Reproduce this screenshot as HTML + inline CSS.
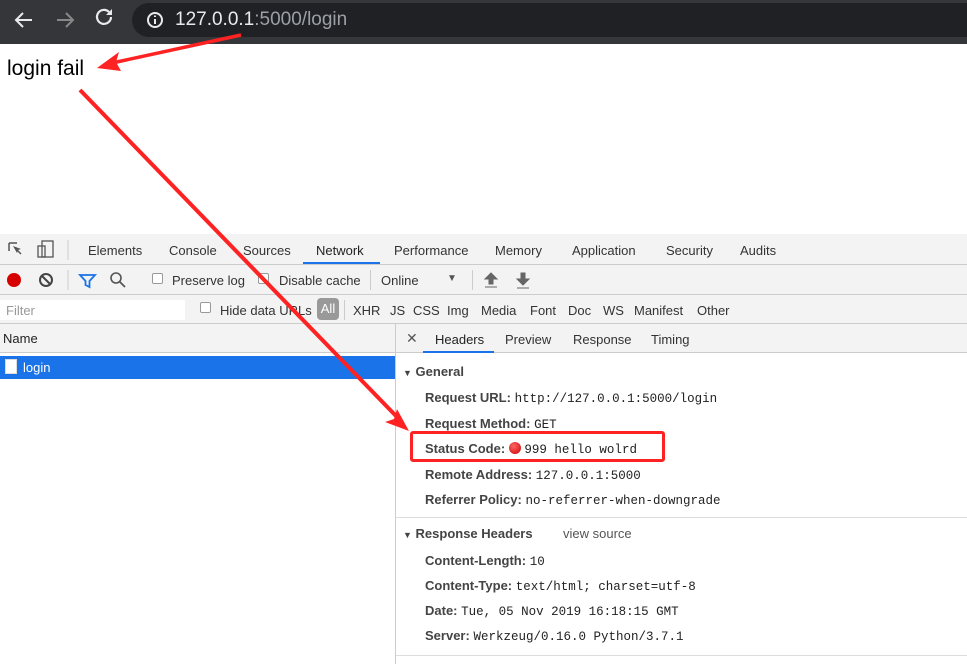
<!DOCTYPE html>
<html><head><meta charset="utf-8"><style>
*{margin:0;padding:0;box-sizing:border-box}
body{width:967px;height:664px;position:relative;overflow:hidden;background:#fff;font-family:"Liberation Sans",sans-serif;font-size:13px;color:#333}
.a{position:absolute;white-space:nowrap}
.m{font-family:"Liberation Mono",monospace;font-size:12.5px;color:#222}
.b{font-weight:bold;color:#444}
.g{color:#555}
</style></head><body>
<div class="a" style="left:0;top:0;width:967px;height:44px;background:#35363a"></div>
<div class="a" style="left:132px;top:3px;width:860px;height:34px;border-radius:17px;background:#202124"></div>
<svg class="a" style="left:0;top:0" width="170" height="44">
<g stroke="#e8eaed" stroke-width="2" fill="none"><path d="M32 20H17M23 13l-7 7 7 7"/></g>
<g stroke="#888" stroke-width="2" fill="none"><path d="M57 20h15M66 13l7 7-7 7"/></g>
<path d="M111 17a7 7 0 1 1-2-5" stroke="#e8eaed" stroke-width="2.2" fill="none"/><path d="M112 9v6h-6z" fill="#e8eaed"/>
<circle cx="155" cy="20" r="7" stroke="#e8eaed" stroke-width="2" fill="none"/><path d="M155 19v5M155 15.5v1.5" stroke="#e8eaed" stroke-width="2"/>
</svg>
<div class="a" style="left:175px;top:9px;font-size:19px;color:#e8eaed">127.0.0.1<span style="color:#9aa0a6">:5000/login</span></div>
<div class="a" style="left:7px;top:57px;font-size:21px;color:#000">login fail</div>

<div class="a" style="left:0;top:234px;width:967px;height:430px;background:#f3f3f3"></div>
<div class="a" style="left:0;top:264px;width:967px;height:1px;background:#ccc"></div>
<div class="a" style="left:0;top:294px;width:967px;height:1px;background:#ccc"></div>
<div class="a" style="left:0;top:323px;width:967px;height:1px;background:#ccc"></div>
<div class="a" style="left:0;top:300px;width:185px;height:20px;background:#fff"></div>
<div class="a" style="left:6px;top:303px;color:#999">Filter</div>
<svg class="a" style="left:0;top:234px" width="130" height="90">
<path d="M9 9h8M9 9v8" stroke="#555" stroke-width="1.5" fill="none"/><path d="M13 12l8 3-3 1-1 3z" fill="#555"/><path d="M17 16l4 4" stroke="#555" stroke-width="1.5"/>
<rect x="38" y="12" width="7" height="11" stroke="#555" fill="none" stroke-width="1.3"/><rect x="42" y="7" width="11" height="16" stroke="#555" fill="none" stroke-width="1.3"/>
<line x1="68" y1="6" x2="68" y2="26" stroke="#ccc"/>
<circle cx="14" cy="46" r="7" fill="#d60000"/>
<circle cx="46" cy="46" r="6" stroke="#444" stroke-width="2" fill="none"/><path d="M42 42l8 8" stroke="#444" stroke-width="2"/>
<line x1="68" y1="36" x2="68" y2="56" stroke="#ccc"/>
<path d="M80 41h15l-5.5 6v6l-4-2v-4z" stroke="#1a73e8" stroke-width="1.8" fill="none"/>
<circle cx="116" cy="44" r="5" stroke="#555" stroke-width="1.6" fill="none"/><path d="M120 48l5 5" stroke="#555" stroke-width="1.8"/>
</svg>
<div class="a" style="left:88px;top:243px">Elements</div>
<div class="a" style="left:169px;top:243px">Console</div>
<div class="a" style="left:243px;top:243px">Sources</div>
<div class="a" style="left:316px;top:243px;color:#222">Network</div>
<div class="a" style="left:303px;top:262px;width:77px;height:2px;background:#1a73e8"></div>
<div class="a" style="left:394px;top:243px">Performance</div>
<div class="a" style="left:495px;top:243px">Memory</div>
<div class="a" style="left:572px;top:243px">Application</div>
<div class="a" style="left:666px;top:243px">Security</div>
<div class="a" style="left:740px;top:243px">Audits</div>
<div class="a" style="left:152px;top:273px;width:11px;height:11px;border:1px solid #999;border-radius:2px;background:#fff"></div>
<div class="a" style="left:172px;top:273px">Preserve log</div>
<div class="a" style="left:258px;top:273px;width:11px;height:11px;border:1px solid #999;border-radius:2px;background:#fff"></div>
<div class="a" style="left:279px;top:273px">Disable cache</div>
<div class="a" style="left:370px;top:270px;width:1px;height:20px;background:#ccc"></div>
<div class="a" style="left:381px;top:273px">Online</div>
<div class="a" style="left:447px;top:273px;font-size:10px;color:#555">▼</div>
<div class="a" style="left:472px;top:270px;width:1px;height:20px;background:#ccc"></div>
<svg class="a" style="left:484px;top:271px" width="50" height="18"><path d="M7 2l-6 6h4v5h4V8h4z M1 16h12" fill="#666" stroke="#666" stroke-width="1"/><path d="M39 14l-6-6h4V2h4v6h4z M33 17h12" fill="#666" stroke="#666"/></svg>
<div class="a" style="left:200px;top:302px;width:11px;height:11px;border:1px solid #999;border-radius:2px;background:#fff"></div>
<div class="a" style="left:220px;top:303px">Hide data URLs</div>
<div class="a" style="left:317px;top:298px;width:22px;height:22px;border-radius:4px;background:#999;color:#fff;text-align:center;line-height:22px">All</div>
<div class="a" style="left:344px;top:300px;width:1px;height:20px;background:#ccc"></div>
<div class="a" style="left:353px;top:303px">XHR</div>
<div class="a" style="left:390px;top:303px">JS</div>
<div class="a" style="left:413px;top:303px">CSS</div>
<div class="a" style="left:447px;top:303px">Img</div>
<div class="a" style="left:481px;top:303px">Media</div>
<div class="a" style="left:530px;top:303px">Font</div>
<div class="a" style="left:568px;top:303px">Doc</div>
<div class="a" style="left:603px;top:303px">WS</div>
<div class="a" style="left:634px;top:303px">Manifest</div>
<div class="a" style="left:697px;top:303px">Other</div>

<div class="a" style="left:0;top:324px;width:395px;height:340px;background:#fff"></div>
<div class="a" style="left:0;top:324px;width:395px;height:29px;background:#f3f3f3;border-bottom:1px solid #ccc"></div>
<div class="a" style="left:3px;top:331px;color:#222">Name</div>
<div class="a" style="left:0;top:356px;width:395px;height:23px;background:#1a73e8"></div>
<div class="a" style="left:5px;top:359px;width:12px;height:15px;background:#fff;border:1px solid #ddd"></div>
<div class="a" style="left:23px;top:360px;color:#fff">login</div>
<div class="a" style="left:395px;top:324px;width:1px;height:340px;background:#ccc"></div>
<div class="a" style="left:396px;top:324px;width:571px;height:340px;background:#fff"></div>
<div class="a" style="left:396px;top:324px;width:571px;height:29px;background:#f3f3f3;border-bottom:1px solid #ccc"></div>
<div class="a" style="left:406px;top:330px;font-size:14px;color:#555">✕</div>
<div class="a" style="left:435px;top:332px;color:#222">Headers</div>
<div class="a" style="left:423px;top:351px;width:71px;height:2px;background:#1a73e8"></div>
<div class="a" style="left:505px;top:332px">Preview</div>
<div class="a" style="left:573px;top:332px">Response</div>
<div class="a" style="left:651px;top:332px">Timing</div>
<div class="a b" style="left:403px;top:364px"><span style="font-size:9px">▼</span> General</div>
<div class="a" style="left:425px;top:390px"><span class="b">Request URL:</span> <span class="m">http://127.0.0.1:5000/login</span></div>
<div class="a" style="left:425px;top:416px"><span class="b">Request Method:</span> <span class="m">GET</span></div>
<div class="a" style="left:425px;top:441px"><span class="b">Status Code:</span> <span style="display:inline-block;width:12px;height:12px;border-radius:6px;background:radial-gradient(circle at 40% 35%,#f66,#c00);vertical-align:-1px"></span> <span class="m">999 hello wolrd</span></div>
<div class="a" style="left:425px;top:467px"><span class="b">Remote Address:</span> <span class="m">127.0.0.1:5000</span></div>
<div class="a" style="left:425px;top:492px"><span class="b">Referrer Policy:</span> <span class="m">no-referrer-when-downgrade</span></div>
<div class="a" style="left:410px;top:431px;width:255px;height:31px;border:3px solid #f22;border-radius:3px"></div>
<div class="a" style="left:396px;top:517px;width:571px;height:1px;background:#ddd"></div>
<div class="a b" style="left:403px;top:526px"><span style="font-size:9px">▼</span> Response Headers</div>
<div class="a g" style="left:563px;top:526px">view source</div>
<div class="a" style="left:425px;top:553px"><span class="b">Content-Length:</span> <span class="m">10</span></div>
<div class="a" style="left:425px;top:578px"><span class="b">Content-Type:</span> <span class="m">text/html; charset=utf-8</span></div>
<div class="a" style="left:425px;top:603px"><span class="b">Date:</span> <span class="m">Tue, 05 Nov 2019 16:18:15 GMT</span></div>
<div class="a" style="left:425px;top:628px"><span class="b">Server:</span> <span class="m">Werkzeug/0.16.0 Python/3.7.1</span></div>
<div class="a" style="left:396px;top:655px;width:571px;height:1px;background:#ddd"></div>

<svg class="a" style="left:0;top:0" width="967" height="664">
<line x1="241" y1="35" x2="112" y2="63" stroke="#f22" stroke-width="3.5"/>
<path d="M97 68l22-16-3 10 5 9z" fill="#f22"/>
<line x1="80" y1="90" x2="397" y2="417" stroke="#f22" stroke-width="4"/>
<path d="M409 431l-24-9 9-3 3-10z" fill="#f22"/>
</svg>
</body></html>
